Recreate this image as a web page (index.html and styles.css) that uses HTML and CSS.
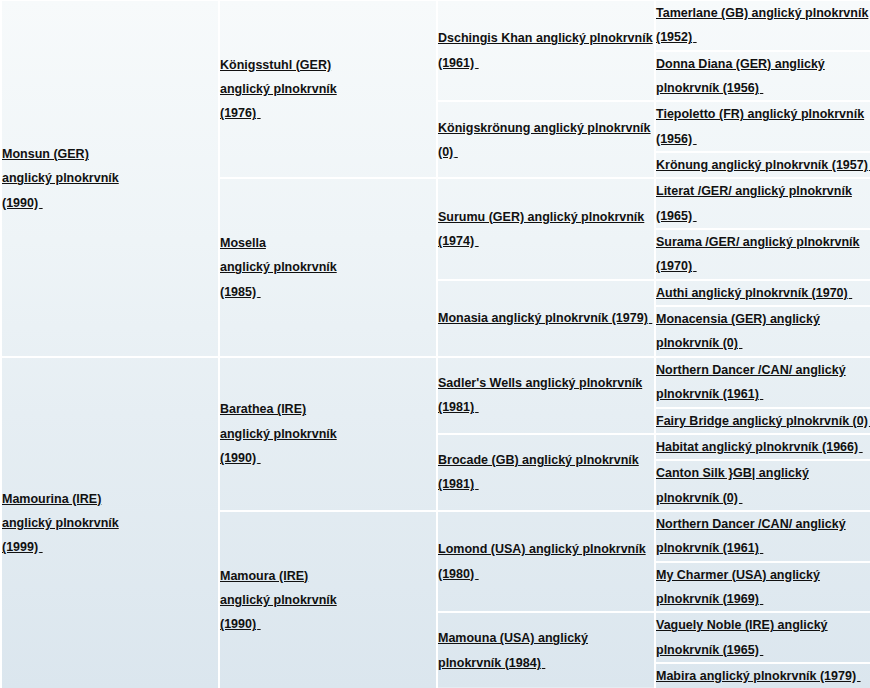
FILE: index.html
```html
<!DOCTYPE html>
<html lang="cs">
<head>
<meta charset="utf-8">
<title>Rodokmen</title>
<link rel="stylesheet" href="styles.css">
</head>
<body>
<table class="pedigree">
  <colgroup><col class="c"><col class="c"><col class="c"><col class="c last"></colgroup>
  <tr>
    <td rowspan="8"><a href="#">Monsun (GER)<br>anglický plnokrvník<br>(1990)</a><a class="d" href="#">&nbsp;</a></td>
    <td rowspan="4"><a href="#">Königsstuhl (GER)<br>anglický plnokrvník<br>(1976)</a><a class="d" href="#">&nbsp;</a></td>
    <td rowspan="2"><a href="#">Dschingis Khan anglický plnokrvník (1961)</a><a class="d" href="#">&nbsp;</a></td>
    <td><a href="#">Tamerlane (GB) anglický plnokrvník (1952)</a><a class="d" href="#">&nbsp;</a></td>
  </tr>
  <tr>
    <td><a href="#">Donna Diana (GER) anglický plnokrvník (1956)</a><a class="d" href="#">&nbsp;</a></td>
  </tr>
  <tr>
    <td rowspan="2"><a href="#">Königskrönung anglický plnokrvník (0)</a><a class="d" href="#">&nbsp;</a></td>
    <td><a href="#">Tiepoletto (FR) anglický plnokrvník (1956)</a><a class="d" href="#">&nbsp;</a></td>
  </tr>
  <tr>
    <td><a href="#">Krönung anglický plnokrvník (1957)</a><a class="d" href="#">&nbsp;</a></td>
  </tr>
  <tr>
    <td rowspan="4"><a href="#">Mosella<br>anglický plnokrvník<br>(1985)</a><a class="d" href="#">&nbsp;</a></td>
    <td rowspan="2"><a href="#">Surumu (GER) anglický plnokrvník (1974)</a><a class="d" href="#">&nbsp;</a></td>
    <td><a href="#">Literat /GER/ anglický plnokrvník (1965)</a><a class="d" href="#">&nbsp;</a></td>
  </tr>
  <tr>
    <td><a href="#">Surama /GER/ anglický plnokrvník (1970)</a><a class="d" href="#">&nbsp;</a></td>
  </tr>
  <tr>
    <td rowspan="2"><a href="#">Monasia anglický plnokrvník (1979)</a><a class="d" href="#">&nbsp;</a></td>
    <td><a href="#">Authi anglický plnokrvník (1970)</a><a class="d" href="#">&nbsp;</a></td>
  </tr>
  <tr>
    <td><a href="#">Monacensia (GER) anglický plnokrvník (0)</a><a class="d" href="#">&nbsp;</a></td>
  </tr>
  <tr>
    <td rowspan="8"><a href="#">Mamourina (IRE)<br>anglický plnokrvník<br>(1999)</a><a class="d" href="#">&nbsp;</a></td>
    <td rowspan="4"><a href="#">Barathea (IRE)<br>anglický plnokrvník<br>(1990)</a><a class="d" href="#">&nbsp;</a></td>
    <td rowspan="2"><a href="#">Sadler's Wells anglický plnokrvník (1981)</a><a class="d" href="#">&nbsp;</a></td>
    <td><a href="#">Northern Dancer /CAN/ anglický plnokrvník (1961)</a><a class="d" href="#">&nbsp;</a></td>
  </tr>
  <tr>
    <td><a href="#">Fairy Bridge anglický plnokrvník (0)</a><a class="d" href="#">&nbsp;</a></td>
  </tr>
  <tr>
    <td rowspan="2"><a href="#">Brocade (GB) anglický plnokrvník (1981)</a><a class="d" href="#">&nbsp;</a></td>
    <td><a href="#">Habitat anglický plnokrvník (1966)</a><a class="d" href="#">&nbsp;</a></td>
  </tr>
  <tr>
    <td><a href="#">Canton Silk }GB| anglický plnokrvník (0)</a><a class="d" href="#">&nbsp;</a></td>
  </tr>
  <tr>
    <td rowspan="4"><a href="#">Mamoura (IRE)<br>anglický plnokrvník<br>(1990)</a><a class="d" href="#">&nbsp;</a></td>
    <td rowspan="2"><a href="#">Lomond (USA) anglický plnokrvník (1980)</a><a class="d" href="#">&nbsp;</a></td>
    <td><a href="#">Northern Dancer /CAN/ anglický plnokrvník (1961)</a><a class="d" href="#">&nbsp;</a></td>
  </tr>
  <tr>
    <td><a href="#">My Charmer (USA) anglický plnokrvník (1969)</a><a class="d" href="#">&nbsp;</a></td>
  </tr>
  <tr>
    <td rowspan="2"><a href="#">Mamouna (USA) anglický plnokrvník (1984)</a><a class="d" href="#">&nbsp;</a></td>
    <td><a href="#">Vaguely Noble (IRE) anglický plnokrvník (1965)</a><a class="d" href="#">&nbsp;</a></td>
  </tr>
  <tr>
    <td><a href="#">Mabira anglický plnokrvník (1979)</a><a class="d" href="#">&nbsp;</a></td>
  </tr>
</table>
</body>
</html>
```

FILE: styles.css
```css
html, body {
  margin: 0;
  padding: 0;
  overflow: hidden;
  background: #ffffff;
}

.pedigree {
  table-layout: fixed;
  border-collapse: separate;
  border-spacing: 2px;
  width: 876px;
  margin-top: -1px;
  font-family: "Liberation Sans", Arial, sans-serif;
  font-weight: bold;
  font-size: 12.5px;
  line-height: 24.35px;
  color: #111111;
  background: #ffffff;
}

.pedigree .c {
  width: 216px;
}

.pedigree .c.last {
  width: 218px;
}

.pedigree td {
  padding: 0;
  vertical-align: middle;
  text-align: left;
  background: linear-gradient(180deg, #f7fafb 0%, #eef4f7 35%, #e6eef3 60%, #dbe6ee 100%) fixed;
}

.pedigree a {
  color: #111111;
  text-decoration: underline;
}

.pedigree a.d {
  margin-left: 1px;
  margin-right: -1px;
}
```
